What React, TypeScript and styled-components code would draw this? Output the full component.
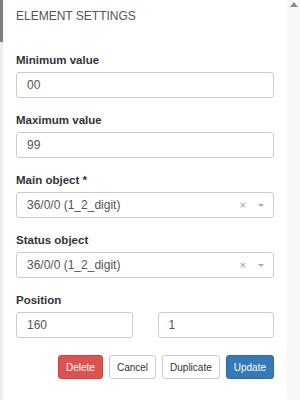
import React from "react";
import styled, { createGlobalStyle } from "styled-components";

const Global = createGlobalStyle`
  html, body { margin: 0; padding: 0; background: #fff; }
  body { font-family: "Liberation Sans", Arial, Helvetica, sans-serif; }
  * { box-sizing: border-box; }
`;

const Frame = styled.div`
  display: flex;
  width: 300px;
  height: 400px;
  overflow: hidden;
`;

const Rail = styled.div`
  width: 3px;
  background: #eeeeee;
  display: flex;
  flex-direction: column;
`;

const RailThumb = styled.div`
  height: 42px;
  background: #808080;
`;

const Panel = styled.div`
  flex: 1;
  background: #fff;
  padding: 0 13px;
  display: flex;
  flex-direction: column;
`;

const Scrollbar = styled.div`
  width: 13px;
  background: #f7f7f7;
  display: flex;
  justify-content: center;
  padding-top: 2px;
`;

const Arrow = styled.div`
  width: 0;
  height: 0;
  border-left: 4px solid transparent;
  border-right: 4px solid transparent;
  border-bottom: 5px solid #8a8a8a;
`;

const Header = styled.div`
  height: 42px;
  padding-top: 9px;
  font-size: 12px;
  line-height: 14px;
  color: #555;
  text-transform: uppercase;
`;

const Form = styled.div`
  padding-top: 11px;
  display: flex;
  flex-direction: column;
`;

const Group = styled.div`
  display: flex;
  flex-direction: column;
  margin-bottom: 15px;
`;

const Label = styled.label`
  font-size: 11.5px;
  font-weight: bold;
  color: #333;
  line-height: 15px;
  margin-bottom: 4px;
`;

const Field = styled.div`
  height: 26px;
  border: 1px solid #ccc;
  border-radius: 3px;
  padding: 0 9px 0 10px;
  display: flex;
  align-items: center;
  font-size: 12px;
  color: #555;
`;

const SelectValue = styled.span`
  flex: 1;
`;

const Clear = styled.span`
  color: #999;
  font-size: 11px;
  margin-right: 12px;
`;

const Caret = styled.span`
  width: 0;
  height: 0;
  border-left: 3px solid transparent;
  border-right: 3px solid transparent;
  border-top: 3px solid #aaa;
`;

const Pair = styled.div`
  display: grid;
  grid-template-columns: 1fr 1fr;
  column-gap: 25px;
`;

const Actions = styled.div`
  display: flex;
  justify-content: flex-end;
  gap: 6px;
  margin-top: 2px;
`;

const Button = styled.button<{ $variant?: "danger" | "primary" | "default" }>`
  height: 24px;
  padding: 0 7px;
  font-family: "Liberation Sans", Arial, sans-serif;
  font-size: 10px;
  border-radius: 3px;
  border: 1px solid
    ${(p) => (p.$variant === "danger" ? "#d43f3a" : p.$variant === "primary" ? "#2e6da4" : "#ccc")};
  background: ${(p) => (p.$variant === "danger" ? "#d9534f" : p.$variant === "primary" ? "#337ab7" : "#fff")};
  color: ${(p) => (p.$variant === "danger" || p.$variant === "primary" ? "#fff" : "#333")};
`;

export default function App() {
  return (
    <>
      <Global />
      <Frame>
        <Rail>
          <RailThumb />
        </Rail>
        <Panel>
          <Header>Element Settings</Header>
          <Form>
            <Group>
              <Label>Minimum value</Label>
              <Field>00</Field>
            </Group>
            <Group>
              <Label>Maximum value</Label>
              <Field>99</Field>
            </Group>
            <Group>
              <Label>Main object *</Label>
              <Field>
                <SelectValue>36/0/0 (1_2_digit)</SelectValue>
                <Clear>×</Clear>
                <Caret />
              </Field>
            </Group>
            <Group>
              <Label>Status object</Label>
              <Field>
                <SelectValue>36/0/0 (1_2_digit)</SelectValue>
                <Clear>×</Clear>
                <Caret />
              </Field>
            </Group>
            <Group>
              <Label>Position</Label>
              <Pair>
                <Field>160</Field>
                <Field>1</Field>
              </Pair>
            </Group>
            <Actions>
              <Button $variant="danger">Delete</Button>
              <Button>Cancel</Button>
              <Button>Duplicate</Button>
              <Button $variant="primary">Update</Button>
            </Actions>
          </Form>
        </Panel>
        <Scrollbar>
          <Arrow />
        </Scrollbar>
      </Frame>
    </>
  );
}
